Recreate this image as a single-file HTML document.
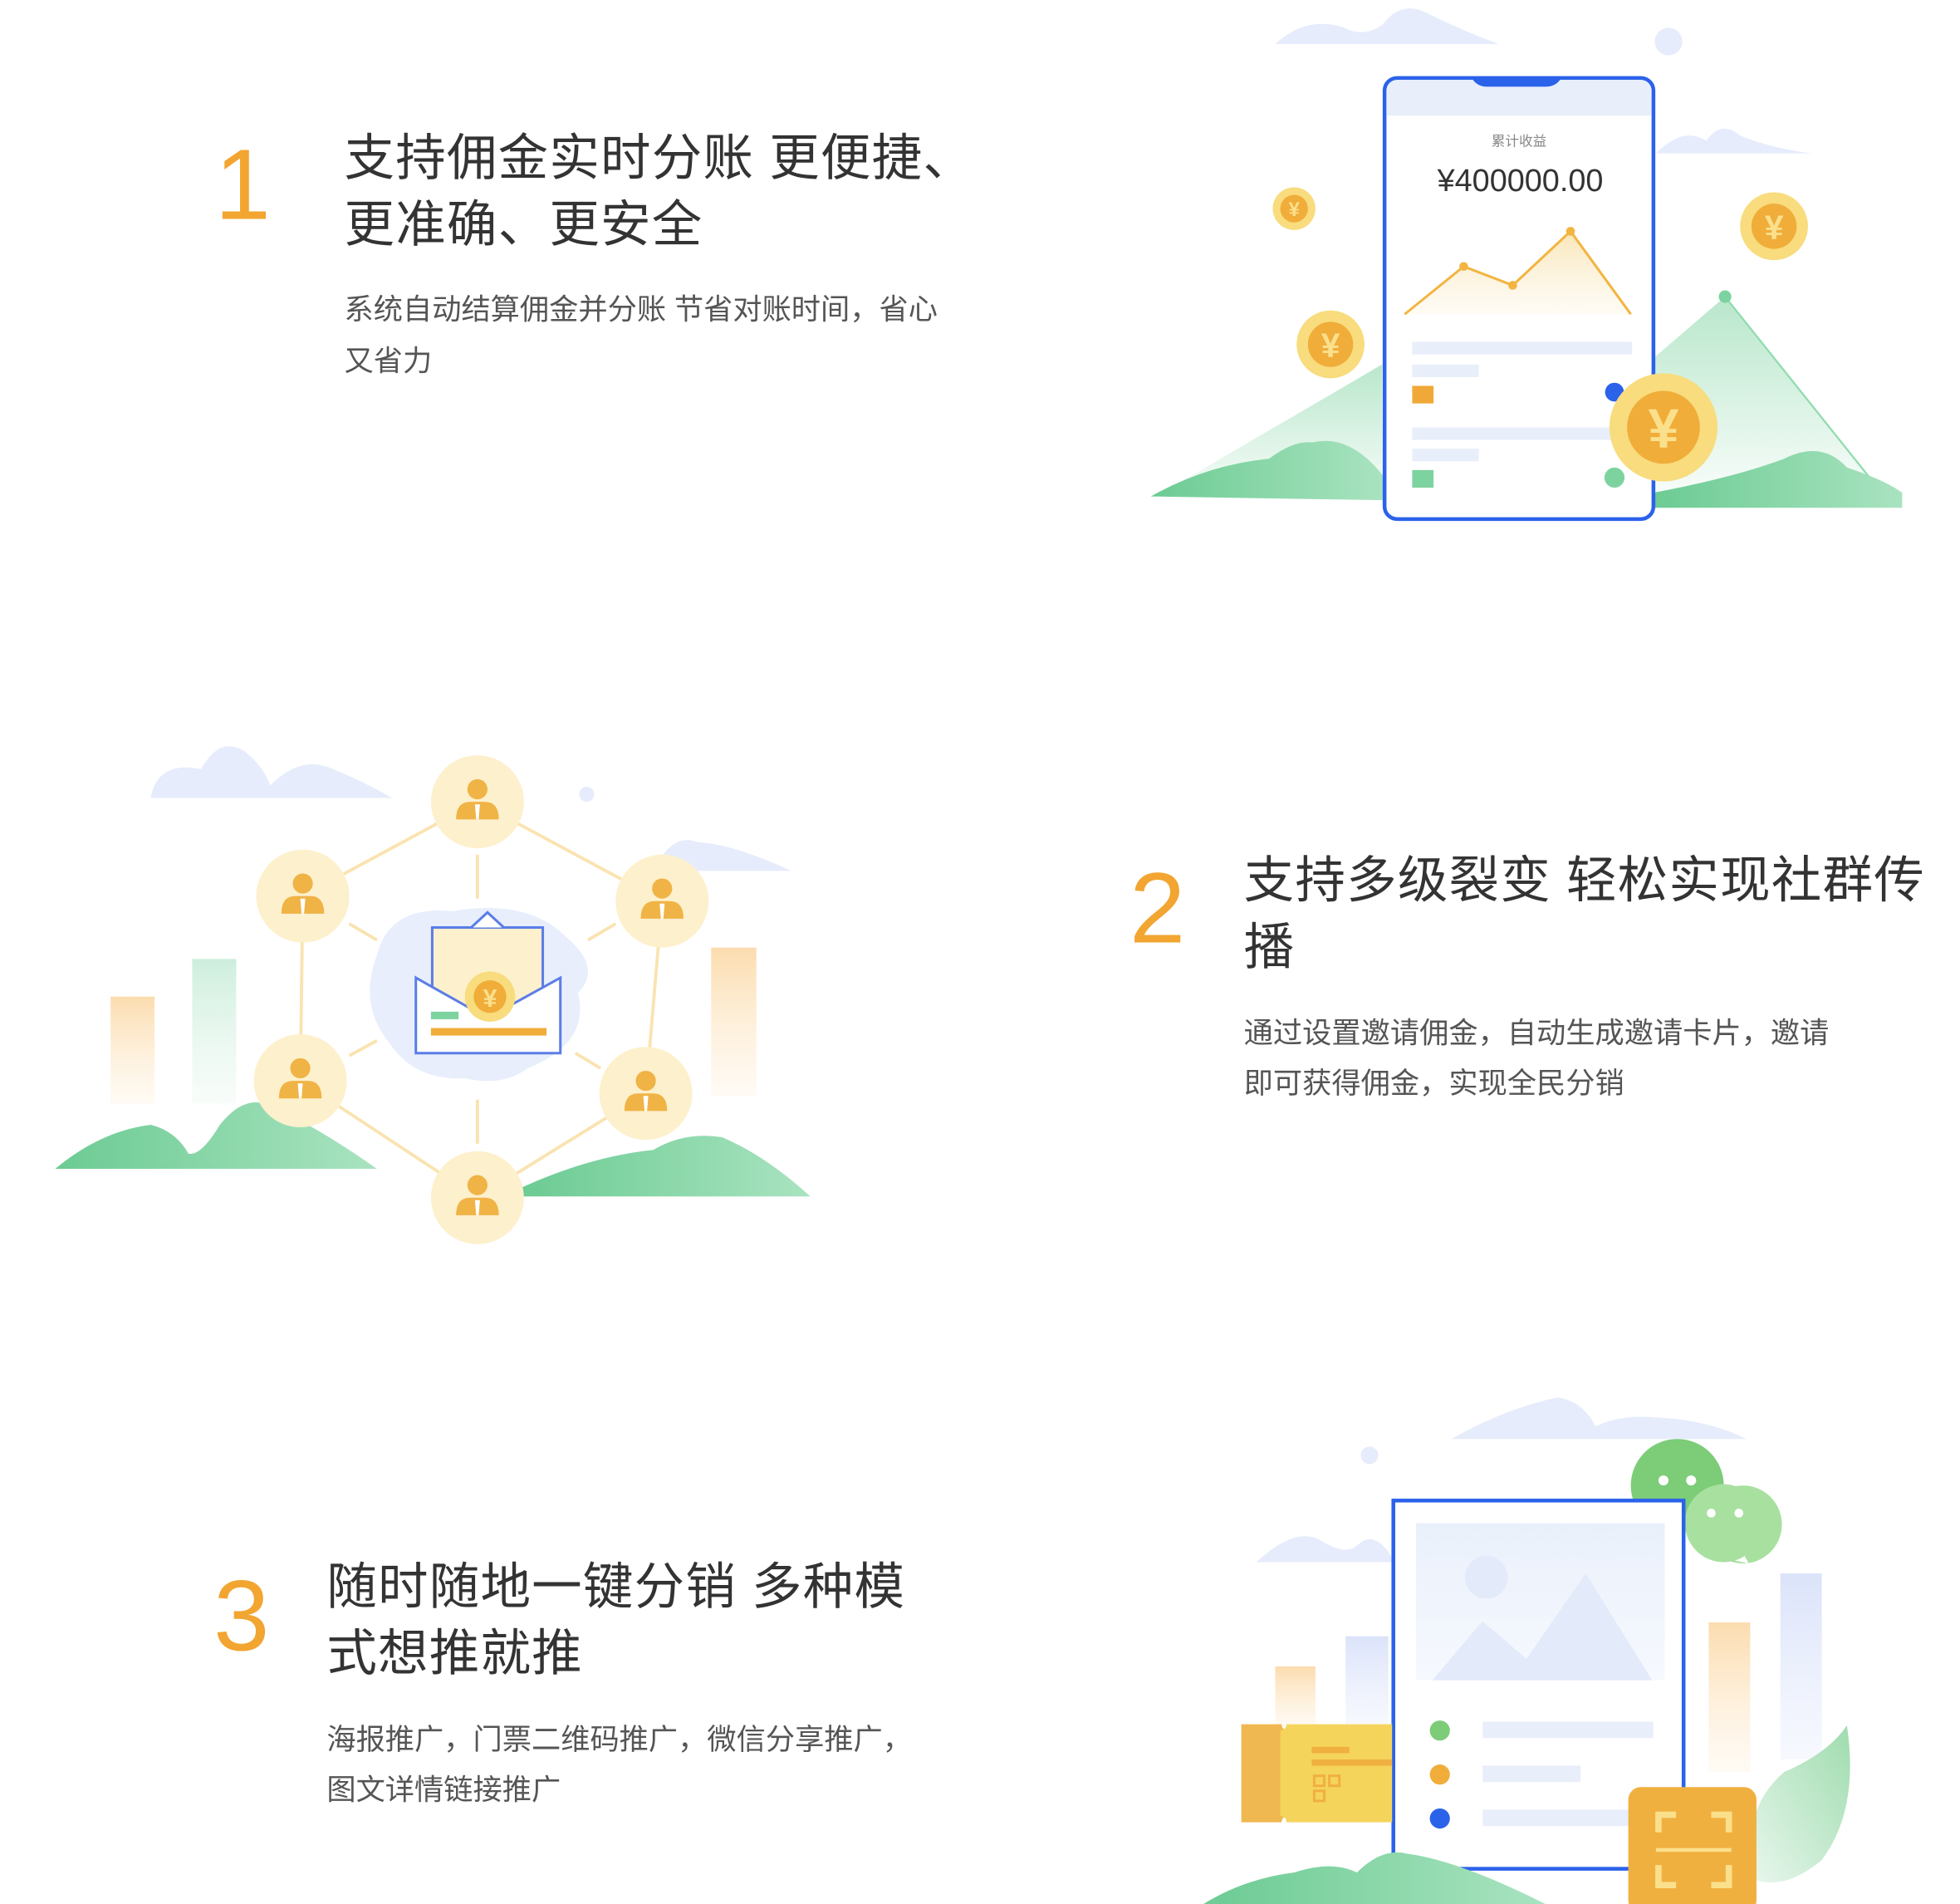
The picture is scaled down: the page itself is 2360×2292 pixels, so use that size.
<!DOCTYPE html>
<html><head><meta charset="utf-8"><style>
html,body{margin:0;padding:0;background:#fff;}
svg{display:block;}
text{font-family:"Liberation Sans","Noto Sans CJK SC",sans-serif;}
.t{letter-spacing:0.8px}
</style></head><body>
<svg width="2360" height="2292" viewBox="0 0 1560 1515" xmlns="http://www.w3.org/2000/svg">
<defs>
<linearGradient id="gm" x1="0" y1="0" x2="0" y2="1"><stop offset="0" stop-color="#7fd3a1" stop-opacity=".55"/><stop offset="1" stop-color="#7fd3a1" stop-opacity=".05"/></linearGradient>
<linearGradient id="gh" x1="0" y1="0" x2="1" y2="0"><stop offset="0" stop-color="#6ccb93"/><stop offset="1" stop-color="#a9e3c0"/></linearGradient>
<linearGradient id="gc" x1="0" y1="0" x2="0" y2="1"><stop offset="0" stop-color="#f6d68a" stop-opacity=".6"/><stop offset="1" stop-color="#fdf3dc" stop-opacity=".3"/></linearGradient>
<linearGradient id="bo" x1="0" y1="0" x2="0" y2="1"><stop offset="0" stop-color="#fbdcae"/><stop offset="1" stop-color="#fff4e4" stop-opacity=".4"/></linearGradient>
<linearGradient id="bg" x1="0" y1="0" x2="0" y2="1"><stop offset="0" stop-color="#cdeedc"/><stop offset="1" stop-color="#eef9f2" stop-opacity=".4"/></linearGradient>
<linearGradient id="bb" x1="0" y1="0" x2="0" y2="1"><stop offset="0" stop-color="#dbe3fa"/><stop offset="1" stop-color="#eef2fd" stop-opacity=".5"/></linearGradient>
<linearGradient id="img" x1="0" y1="0" x2="0" y2="1"><stop offset="0" stop-color="#eaf0fb"/><stop offset="1" stop-color="#f6f9fe"/></linearGradient>
<linearGradient id="leaf" x1="1" y1="0" x2="0" y2="1"><stop offset="0" stop-color="#9fdcae"/><stop offset="1" stop-color="#e9f7ee"/></linearGradient>
</defs>

<!-- Section 1 text -->
<text x="171" y="174" font-size="80" fill="#f2a531">1</text>
<text class="t" x="274" y="139" font-size="40" fill="#333">支持佣金实时分账 更便捷、</text>
<text class="t" x="274" y="192" font-size="40" fill="#333">更准确、更安全</text>
<text x="274" y="254" font-size="23.3" fill="#555">系统自动结算佣金并分账 节省对账时间，省心</text>
<text x="274" y="295" font-size="23.3" fill="#555">又省力</text>

<!-- Section 1 illustration -->
<path d="M1015 35 Q1040 12 1070 22 Q1085 30 1100 20 Q1115 0 1135 10 Q1165 25 1193 35 Z" fill="#e6ecfb"/>
<path d="M1318 122 Q1340 100 1358 112 Q1370 95 1385 108 Q1410 118 1442 122 Z" fill="#e6ecfb"/>
<circle cx="1328" cy="33" r="11" fill="#e6ecfb"/>
<path d="M920 395 L1100 290 L1100 395 Z" fill="url(#gm)"/>
<path d="M1316 285 L1373 236 L1500 395 L1316 395 Z" fill="url(#gm)"/>
<path d="M1373 236 L1500 395" stroke="#8fdcae" stroke-width="1.5"/>
<circle cx="1373" cy="236" r="5" fill="#7dd39f"/>
<path d="M916 395 Q960 370 1010 365 Q1030 350 1045 352 Q1075 345 1102 380 L1102 398 Z" fill="url(#gh)"/>
<path d="M1316 392 Q1380 380 1420 365 Q1450 350 1470 372 Q1500 382 1514 392 L1514 404 L1316 404 Z" fill="url(#gh)"/>
<rect x="1102" y="62" width="214" height="351" rx="10" fill="#fff" stroke="#2b62ea" stroke-width="3"/>
<path d="M1104 92 V72 Q1104 64 1112 64 H1306 Q1314 64 1314 72 V92 Z" fill="#e8effb"/>
<path d="M1172 63 H1242 Q1238 69 1230 69 H1184 Q1176 69 1172 63 Z" fill="#2b62ea"/>
<text x="1209" y="116" font-size="11" fill="#888" text-anchor="middle">累计收益</text>
<text x="1210" y="152" font-size="25" fill="#333" text-anchor="middle">¥400000.00</text>
<path d="M1118 250 L1165 212 L1204 227 L1250 184 L1298 250 Z" fill="url(#gc)"/>
<path d="M1118 250 L1165 212 L1204 227 L1250 184 L1298 250" fill="none" stroke="#f3b440" stroke-width="2"/>
<circle cx="1165" cy="212" r="3.5" fill="#f3b440"/><circle cx="1204" cy="227" r="3.5" fill="#f3b440"/><circle cx="1250" cy="184" r="3.5" fill="#f3b440"/>
<rect x="1124" y="272" width="175" height="10" fill="#e8eefa"/>
<rect x="1124" y="290" width="53" height="10" fill="#e8eefa"/>
<rect x="1124" y="307" width="17" height="14" fill="#f0a938"/>
<circle cx="1285" cy="312" r="7.5" fill="#2b62ea"/>
<rect x="1124" y="340" width="160" height="10" fill="#e8eefa"/>
<rect x="1124" y="357" width="53" height="10" fill="#e8eefa"/>
<rect x="1124" y="374" width="17" height="14" fill="#7dd39f"/>
<circle cx="1285" cy="380" r="8" fill="#7dd39f"/>
<g font-weight="bold" text-anchor="middle" fill="#fbe08c">
<circle cx="1324" cy="340" r="43" fill="#f8dc7d"/><circle cx="1324" cy="340" r="29" fill="#f0ad3a"/><text x="1324" y="356" font-size="44">¥</text>
<circle cx="1030" cy="166" r="17" fill="#f8dc7d"/><circle cx="1030" cy="166" r="11" fill="#f0ad3a"/><text x="1030" y="172" font-size="16">¥</text>
<circle cx="1059" cy="274" r="27" fill="#f8dc7d"/><circle cx="1059" cy="274" r="18" fill="#f0ad3a"/><text x="1059" y="284" font-size="27">¥</text>
<circle cx="1412" cy="180" r="27" fill="#f8dc7d"/><circle cx="1412" cy="180" r="18" fill="#f0ad3a"/><text x="1412" y="190" font-size="27">¥</text>
</g>

<!-- Section 2 illustration -->
<path d="M120 635 Q125 605 160 612 Q175 585 195 598 Q210 610 215 625 Q240 600 265 612 Q290 622 312 635 Z" fill="#e6ecfb"/>
<path d="M520 693 Q535 662 555 670 Q585 672 630 693 Z" fill="#e6ecfb"/>
<circle cx="467" cy="632" r="6" fill="#e6ecfb"/>
<rect x="88" y="793" width="35" height="85" fill="url(#bo)"/>
<rect x="153" y="763" width="35" height="115" fill="url(#bg)"/>
<rect x="566" y="754" width="36" height="118" fill="url(#bo)"/>
<path d="M44 930 Q80 900 120 895 Q140 900 150 918 Q160 920 175 895 Q195 870 215 880 Q250 895 300 930 Z" fill="url(#gh)"/>
<path d="M415 945 Q470 920 520 915 Q545 900 575 905 Q610 920 645 952 L415 952 Z" fill="url(#gh)"/>
<g stroke="#fae3b0" stroke-width="2.5" fill="none">
<path d="M380 638 L241 713 L239 860 L380 953 L514 870 L527 717 Z"/>
<path d="M380 680 V715 M380 875 V910 M278 735 L300 748 M490 735 L468 748 M278 840 L300 828 M478 850 L458 838"/>
</g>
<path d="M300 760 Q310 720 360 725 Q420 715 450 745 Q480 770 460 790 Q470 830 420 850 Q400 865 370 858 Q330 860 310 830 Q285 800 300 760 Z" fill="#e8eefc"/>
<rect x="344" y="738" width="88" height="70" fill="#fdf0cc" stroke="#5b7de8" stroke-width="2"/>
<path d="M375 738 L388 726 L401 738" fill="#fff" stroke="#5b7de8" stroke-width="2"/>
<path d="M331 778 L331 838 L446 838 L446 778 L388 810 Z" fill="#fff" stroke="#5b7de8" stroke-width="2"/>
<circle cx="390" cy="793" r="20" fill="#f8dc7d"/><circle cx="390" cy="793" r="13" fill="#f0ad3a"/>
<text x="390" y="801" font-size="20" font-weight="bold" fill="#fbe08c" text-anchor="middle">¥</text>
<rect x="343" y="805" width="22" height="6" fill="#7dd39f"/>
<rect x="343" y="818" width="92" height="6" fill="#f0ad3a"/>
<g>
<g transform="translate(380 638)"><circle r="37" fill="#fdf0cc"/><circle cy="-10" r="8" fill="#f0b345"/><path d="M-17 14 Q-17 0 -6 0 L6 0 Q17 0 17 14 Z" fill="#f0b345"/><path d="M-2 2 L2 2 L1 14 L-1 14 Z" fill="#fff"/></g>
<g transform="translate(241 713)"><circle r="37" fill="#fdf0cc"/><circle cy="-10" r="8" fill="#f0b345"/><path d="M-17 14 Q-17 0 -6 0 L6 0 Q17 0 17 14 Z" fill="#f0b345"/><path d="M-2 2 L2 2 L1 14 L-1 14 Z" fill="#fff"/></g>
<g transform="translate(527 717)"><circle r="37" fill="#fdf0cc"/><circle cy="-10" r="8" fill="#f0b345"/><path d="M-17 14 Q-17 0 -6 0 L6 0 Q17 0 17 14 Z" fill="#f0b345"/><path d="M-2 2 L2 2 L1 14 L-1 14 Z" fill="#fff"/></g>
<g transform="translate(239 860)"><circle r="37" fill="#fdf0cc"/><circle cy="-10" r="8" fill="#f0b345"/><path d="M-17 14 Q-17 0 -6 0 L6 0 Q17 0 17 14 Z" fill="#f0b345"/><path d="M-2 2 L2 2 L1 14 L-1 14 Z" fill="#fff"/></g>
<g transform="translate(514 870)"><circle r="37" fill="#fdf0cc"/><circle cy="-10" r="8" fill="#f0b345"/><path d="M-17 14 Q-17 0 -6 0 L6 0 Q17 0 17 14 Z" fill="#f0b345"/><path d="M-2 2 L2 2 L1 14 L-1 14 Z" fill="#fff"/></g>
<g transform="translate(380 953)"><circle r="37" fill="#fdf0cc"/><circle cy="-10" r="8" fill="#f0b345"/><path d="M-17 14 Q-17 0 -6 0 L6 0 Q17 0 17 14 Z" fill="#f0b345"/><path d="M-2 2 L2 2 L1 14 L-1 14 Z" fill="#fff"/></g>
</g>

<!-- Section 2 text -->
<text x="899" y="750" font-size="80" fill="#f2a531">2</text>
<text class="t" x="990" y="714" font-size="40" fill="#333">支持多级裂变 轻松实现社群传</text>
<text class="t" x="990" y="767" font-size="40" fill="#333">播</text>
<text x="990" y="830" font-size="23.3" fill="#555">通过设置邀请佣金，自动生成邀请卡片，邀请</text>
<text x="990" y="870" font-size="23.3" fill="#555">即可获得佣金，实现全民分销</text>

<!-- Section 3 text -->
<text x="170" y="1313" font-size="80" fill="#f2a531">3</text>
<text class="t" x="260" y="1276" font-size="40" fill="#333">随时随地一键分销 多种模</text>
<text class="t" x="260" y="1329" font-size="40" fill="#333">式想推就推</text>
<text x="260" y="1392" font-size="23.3" fill="#555">海报推广，门票二维码推广，微信分享推广，</text>
<text x="260" y="1432" font-size="23.3" fill="#555">图文详情链接推广</text>

<!-- Section 3 illustration -->
<path d="M1155 1145 Q1200 1120 1240 1112 Q1260 1115 1270 1135 Q1290 1125 1320 1128 Q1360 1130 1390 1145 Z" fill="#e6ecfb"/>
<path d="M1000 1243 Q1030 1215 1050 1225 Q1070 1238 1080 1230 Q1095 1215 1110 1243 Z" fill="#e6ecfb"/>
<circle cx="1090" cy="1158" r="7" fill="#e6ecfb"/>
<rect x="1015" y="1326" width="32" height="50" fill="url(#bo)"/>
<rect x="1071" y="1302" width="34" height="70" fill="url(#bb)"/>
<rect x="1360" y="1291" width="33" height="119" fill="url(#bo)"/>
<rect x="1417" y="1252" width="33" height="148" fill="url(#bb)"/>
<path d="M1470 1373 Q1480 1440 1450 1480 Q1420 1505 1395 1495 Q1385 1440 1420 1410 Q1455 1395 1470 1373 Z" fill="url(#leaf)"/>
<circle cx="1335" cy="1182" r="37" fill="#7ccc78"/>
<circle cx="1324" cy="1178" r="4" fill="#fff"/><circle cx="1346" cy="1178" r="4" fill="#fff"/>
<path d="M1372 1186 A31 31 0 1 1 1372 1240 L1392 1244 L1385 1232 A31 31 0 0 0 1372 1186 Z" fill="#a8e0a0"/>
<circle cx="1372" cy="1212" r="31" fill="#a8e0a0"/>
<circle cx="1362" cy="1204" r="3.5" fill="#fff"/><circle cx="1384" cy="1204" r="3.5" fill="#fff"/>
<rect x="1109" y="1194" width="231" height="293" fill="#fff" stroke="#2b62ea" stroke-width="3"/>
<rect x="1127" y="1212" width="198" height="125" fill="url(#img)"/>
<circle cx="1183" cy="1255" r="17" fill="#e3eaf9"/>
<path d="M1140 1337 L1180 1290 L1215 1320 L1262 1252 L1315 1337 Z" fill="#e3eaf9"/>
<circle cx="1146" cy="1377" r="8" fill="#7ccc78"/>
<circle cx="1146" cy="1412" r="8" fill="#f0ad3a"/>
<circle cx="1146" cy="1447" r="8" fill="#2b62ea"/>
<rect x="1180" y="1370" width="136" height="13" fill="#e8eefa"/>
<rect x="1180" y="1405" width="78" height="13" fill="#e8eefa"/>
<rect x="1180" y="1440" width="120" height="13" fill="#e8eefa"/>
<path d="M988 1372 H1020 A5 5 0 0 0 1025 1377 V1445 A5 5 0 0 0 1020 1450 H988 Z" fill="#f0b850"/>
<path d="M1024 1372 H1108 V1450 H1024 A5 5 0 0 0 1019 1445 V1377 A5 5 0 0 0 1024 1372 Z" fill="#f5d45c"/>
<rect x="1044" y="1390" width="30" height="5" fill="#f0b040"/>
<rect x="1044" y="1400" width="64" height="5" fill="#f0b040"/>
<g fill="none" stroke="#f0b040" stroke-width="2"><rect x="1046" y="1413" width="8" height="8"/><rect x="1058" y="1413" width="8" height="8"/><rect x="1046" y="1425" width="8" height="8"/></g>
<rect x="1296" y="1422" width="102" height="100" rx="10" fill="#f0b040"/>
<g fill="none" stroke="#fbe08c" stroke-width="5">
<path d="M1320 1458 V1444 H1334 M1362 1444 H1376 V1458 M1376 1484 V1500 H1362 M1334 1500 H1320 V1484"/>
<path d="M1318 1472 H1378" stroke-width="3"/>
</g>
<path d="M958 1515 Q990 1495 1030 1490 Q1060 1480 1080 1490 Q1100 1470 1120 1475 Q1160 1480 1230 1515 Z" fill="url(#gh)"/>
</svg>
</body></html>
